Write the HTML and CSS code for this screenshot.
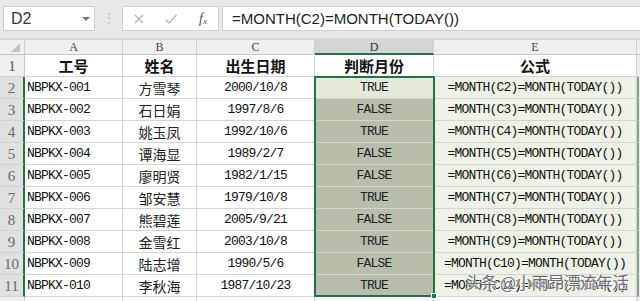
FILE: index.html
```html
<!DOCTYPE html>
<html>
<head>
<meta charset="utf-8">
<link rel="stylesheet" href="styles.css">
</head>
<body>
<div class="toolbar">
  <div class="namebox"><span>D2</span><span class="caret"></span></div>
  <div class="sep">⋮</div>
  <div class="fbtns">
    <svg class="ic" width="12" height="12" viewBox="0 0 12 12"><path d="M2 2L10 10M10 2L2 10" stroke="#b4b4b4" stroke-width="1.3" fill="none"/></svg>
    <svg class="ic" width="14" height="12" viewBox="0 0 14 12"><path d="M1.5 6.5L5 10L12.5 2" stroke="#b4b4b4" stroke-width="1.3" fill="none"/></svg>
    <span class="fx"><i>f</i><sub>x</sub></span>
  </div>
  <div class="fbar">=MONTH(C2)=MONTH(TODAY())</div>
</div>
<div class="sheet">
  <div class="grid">
    <div class="ch corner"><span class="tri"></span></div>
    <div class="ch">A</div><div class="ch">B</div><div class="ch">C</div><div class="ch sel">D</div><div class="ch">E</div><div class="ch rest"></div>

    <div class="rh">1</div>
    <div class="c h">工号</div><div class="c h">姓名</div><div class="c h">出生日期</div><div class="c h">判断月份</div><div class="c h">公式</div><div class="c rest"></div>

    <div class="rh on">2</div>
    <div class="c m l">NBPKX-001</div><div class="c n">方雪琴</div><div class="c m">2000/10/8</div><div class="c m d act">TRUE</div><div class="c m e">=MONTH(C2)=MONTH(TODAY())</div><div class="c rest on"></div>

    <div class="rh on">3</div>
    <div class="c m l">NBPKX-002</div><div class="c n">石日娟</div><div class="c m">1997/8/6</div><div class="c m d">FALSE</div><div class="c m e">=MONTH(C3)=MONTH(TODAY())</div><div class="c rest on"></div>

    <div class="rh on">4</div>
    <div class="c m l">NBPKX-003</div><div class="c n">姚玉凤</div><div class="c m">1992/10/6</div><div class="c m d">TRUE</div><div class="c m e">=MONTH(C4)=MONTH(TODAY())</div><div class="c rest on"></div>

    <div class="rh on">5</div>
    <div class="c m l">NBPKX-004</div><div class="c n">谭海显</div><div class="c m">1989/2/7</div><div class="c m d">FALSE</div><div class="c m e">=MONTH(C5)=MONTH(TODAY())</div><div class="c rest on"></div>

    <div class="rh on">6</div>
    <div class="c m l">NBPKX-005</div><div class="c n">廖明贤</div><div class="c m">1982/1/15</div><div class="c m d">FALSE</div><div class="c m e">=MONTH(C6)=MONTH(TODAY())</div><div class="c rest on"></div>

    <div class="rh on">7</div>
    <div class="c m l">NBPKX-006</div><div class="c n">邹安慧</div><div class="c m">1979/10/8</div><div class="c m d">TRUE</div><div class="c m e">=MONTH(C7)=MONTH(TODAY())</div><div class="c rest on"></div>

    <div class="rh on">8</div>
    <div class="c m l">NBPKX-007</div><div class="c n">熊碧莲</div><div class="c m">2005/9/21</div><div class="c m d">FALSE</div><div class="c m e">=MONTH(C8)=MONTH(TODAY())</div><div class="c rest on"></div>

    <div class="rh on">9</div>
    <div class="c m l">NBPKX-008</div><div class="c n">金雪红</div><div class="c m">2003/10/8</div><div class="c m d">TRUE</div><div class="c m e">=MONTH(C9)=MONTH(TODAY())</div><div class="c rest on"></div>

    <div class="rh on">10</div>
    <div class="c m l">NBPKX-009</div><div class="c n">陆志增</div><div class="c m">1990/5/6</div><div class="c m d">FALSE</div><div class="c m e">=MONTH(C10)=MONTH(TODAY())</div><div class="c rest on"></div>

    <div class="rh on">11</div>
    <div class="c m l">NBPKX-010</div><div class="c n">李秋海</div><div class="c m">1987/10/23</div><div class="c m d">TRUE</div><div class="c m e">=MONTH(C11)=MONTH(TODAY())</div><div class="c rest on"></div>

    <div class="rh"></div>
    <div class="c"></div><div class="c"></div><div class="c"></div><div class="c"></div><div class="c"></div><div class="c rest"></div>
  </div>
  <div class="selbox"><span class="handle"></span></div>
  <div class="wm">头条 @小雨昂漂流年活</div>
</div>
</body>
</html>
```
FILE: styles.css
```css
* { box-sizing: border-box; }
html, body { margin: 0; padding: 0; background: #f0f0f0; overflow: hidden; }
body { width: 640px; height: 301px; font-family: "Liberation Sans", Arial, sans-serif; }

.toolbar {
  height: 39px;
  background: #e8e8e8;
  display: flex;
  align-items: flex-start;
  padding: 6px 0 0 3px;
  border-bottom: 1px solid #dedede;
}
.namebox {
  width: 92px; height: 25px;
  background: #fff;
  border: 1px solid #cfcfcf;
  display: flex; align-items: center; justify-content: space-between;
  padding: 0 4px 0 7px;
  font-size: 16px; color: #333;
}
.caret {
  width: 0; height: 0;
  border-left: 4px solid transparent; border-right: 4px solid transparent;
  border-top: 4px solid #777;
}
.sep { width: 27px; text-align: center; color: #c4c4c4; font-size: 14px; line-height: 25px; }
.fbtns {
  width: 97px; height: 25px;
  background: #fff;
  border: 1px solid #cfcfcf;
  display: flex; align-items: center;
  padding: 0 0 0 10px; gap: 0;
}
.fbtns .ic:first-child { margin-right: 19px; }
.fbtns .ic:nth-child(2) { margin-right: 21px; }
.fx { font-family: "Liberation Serif", serif; font-size: 14px; color: #555; }
.fx sub { font-size: 9px; vertical-align: -1px; font-style: italic; }
.fbar {
  flex: 1; height: 25px; margin-left: 3px;
  background: #fff;
  border: 1px solid #cfcfcf; border-right: none;
  padding: 0 0 0 9px;
  font-size: 15px; color: #222; line-height: 23px;
}

.sheet { position: relative; background: #fff; }
.grid {
  display: grid;
  grid-template-columns: 25px 98px 74px 118px 119px 203px 1fr;
  grid-template-rows: 16px repeat(11, 22px) 10px;
}
.ch {
  background: #efefef;
  border-right: 1px solid #d0d0d0;
  border-bottom: 1px solid #c8c8c8;
  border-top: 1px solid #d8d8d8;
  text-align: center;
  font-family: "Liberation Serif", serif; font-size: 12px; line-height: 14px; color: #444;
}
.ch.sel { background: #d4d4d4; border-bottom: 2px solid #217346; color: #333; }
.ch.rest { border-right: none; }
.corner { position: relative; }
.tri {
  position: absolute; right: 4px; bottom: 2px;
  width: 0; height: 0;
  border-left: 9px solid transparent; border-bottom: 9px solid #c6c6c6;
}
.rh {
  background: #efefef;
  border-right: 1px solid #c8c8c8;
  border-bottom: 1px solid #d4d4d4;
  display: flex; align-items: flex-end; justify-content: center;
  padding-bottom: 1px;
  font-family: "Liberation Serif", serif; font-size: 15px; color: #555;
}
.rh.on { background: #e0e0e0; border-right: 2px solid #217346; color: #6a6a6a; }
.c {
  border-right: 1px solid #d4d4d4;
  border-bottom: 1px solid #d4d4d4;
  display: flex; align-items: flex-end; justify-content: center;
  padding-bottom: 2px;
  white-space: nowrap; overflow: visible;
  color: #111;
}
.c.rest { border-right: none; background: #ececec; }
.c.rest.on { border-left: 2px solid #7fa58e; }
.c.h {
  font-family: "Noto Sans CJK SC", sans-serif; font-weight: 700; font-size: 15px;
  line-height: 20px; padding-bottom: 0; color: #111;
}
.c.m {
  font-family: "Liberation Mono", monospace; font-size: 13px; letter-spacing: -0.8px;
  line-height: 16px;
}
.c.l { justify-content: flex-start; padding-left: 2px; }
.c.n {
  font-family: "Noto Sans CJK SC", sans-serif; font-size: 14px; line-height: 19px;
  padding-bottom: 0; color: #222;
}
.c.d { background: #b8bdac; color: #222; }
.c.d.act { background: #e6eadb; }
.c.e { background: #eef1e6; }

.selbox {
  position: absolute;
  left: 314px; top: 37px;
  width: 121px; height: 221px;
  border: 2px solid #217346;
  pointer-events: none;
}
.handle {
  position: absolute; right: -4px; bottom: -4px;
  width: 6px; height: 6px; background: #217346; border: 1px solid #fff;
}
.wm {
  position: absolute; left: 465px; top: 231px;
  font-family: "Noto Sans CJK SC", sans-serif; font-size: 17px; letter-spacing: -0.9px;
  line-height: 24px;
  color: #6e6e6e;
  text-shadow: 0 0 2px #fff, 0 0 2px #fff, 0 0 1px #fff;
  white-space: nowrap;
}
```
